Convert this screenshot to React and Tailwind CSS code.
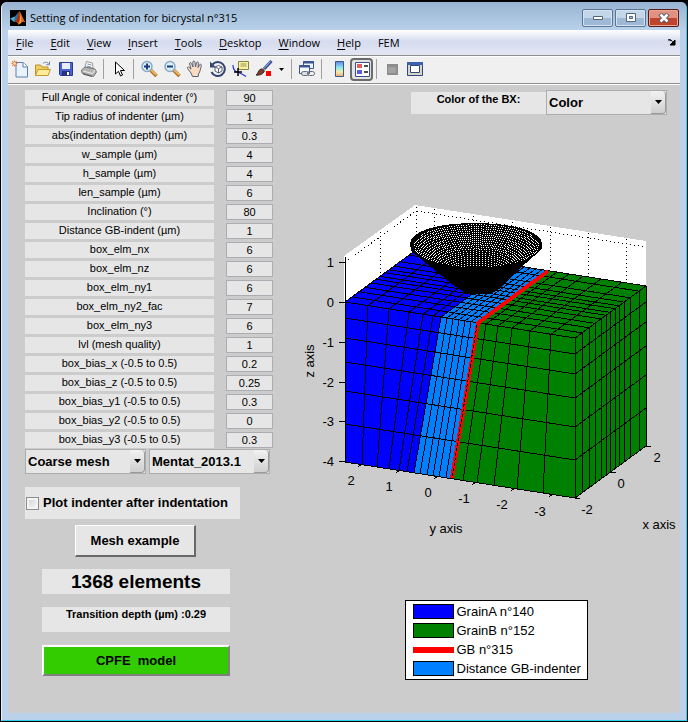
import React from "react";

const PARAMS = [
  ["Full Angle of conical indenter (°)", "90"],
  ["Tip radius of indenter (µm)", "1"],
  ["abs(indentation depth) (µm)", "0.3"],
  ["w_sample (µm)", "4"],
  ["h_sample (µm)", "4"],
  ["len_sample (µm)", "6"],
  ["Inclination (°)", "80"],
  ["Distance GB-indent (µm)", "1"],
  ["box_elm_nx", "6"],
  ["box_elm_nz", "6"],
  ["box_elm_ny1", "6"],
  ["box_elm_ny2_fac", "7"],
  ["box_elm_ny3", "6"],
  ["lvl (mesh quality)", "1"],
  ["box_bias_x (-0.5 to 0.5)", "0.2"],
  ["box_bias_z (-0.5 to 0.5)", "0.25"],
  ["box_bias_y1 (-0.5 to 0.5)", "0.3"],
  ["box_bias_y2 (-0.5 to 0.5)", "0"],
  ["box_bias_y3 (-0.5 to 0.5)", "0.3"],
];

const MENUS = ["File", "Edit", "View", "Insert", "Tools", "Desktop", "Window", "Help"];

/* ---------- toolbar icons ---------- */

const Icon = ({ children, size = 18 }) => (
  <svg width={size} height={size} viewBox="0 0 18 18" aria-hidden="true">
    {children}
  </svg>
);

const NewIcon = () => (
  <Icon>
    <path d="M5 2.500h7l4.500 4V17H5z" fill="#e9f3fd" stroke="#5f7fae" />
    <path d="M12 2.500V7h4.500" fill="#fff" stroke="#5f7fae" />
    <path d="M3.500 0.500v6M0.500 3.500h6M1.300 1.300l4.400 4.400M5.700 1.300L1.300 5.700" stroke="#e0793f" strokeWidth="1.200" />
    <circle cx="3.500" cy="3.500" r="1.200" fill="#fff3c0" />
  </Icon>
);
const OpenIcon = () => (
  <Icon>
    <path d="M1.500 15.500V5h5l1.500 2h6v8.500z" fill="#f2cf5c" stroke="#b8912c" />
    <path d="M1.500 15.500L4 9.500h12.500l-2.500 6z" fill="#fdeb9c" stroke="#c29a2e" />
    <path d="M9 3.500c2-2 4.500-1.500 6 .8M15.500 1.500v3.200h-3.200" fill="none" stroke="#6f86a0" />
  </Icon>
);
const SaveIcon = () => (
  <Icon>
    <path d="M2.500 2.500h13v13h-12l-1-1z" fill="#4a62cf" stroke="#2b3b95" />
    <path d="M5 3h8v6H5z" fill="#e8eefb" />
    <path d="M5 11h8v4.500H5z" fill="#25327c" />
    <path d="M10 12h2v3h-2z" fill="#fff" />
  </Icon>
);
const PrintIcon = () => (
  <Icon>
    <path d="M5 7L6.500 1.500l6 1.500L13 8z" fill="#fff" stroke="#999" />
    <path d="M7.500 4l4 1M7 6l4 1" stroke="#7f93b0" />
    <path d="M1.500 10L5 7l10 2 1.500 3-3 4.500L2 13z" fill="#b4b4b4" stroke="#777" />
    <path d="M3 11l9.500 2.500L15 10" fill="none" stroke="#eee" />
    <path d="M3 14l9 2.500" stroke="#555" />
  </Icon>
);
const CursorIcon = () => (
  <Icon>
    <path d="M5.500 2v12l3-2.700 2 4.700 2-1-2-4.500h4z" fill="#fff" stroke="#000" />
  </Icon>
);
const ZoomIcon = ({ plus }) => (
  <Icon>
    <path d="M10.500 10l6 6" stroke="#a8702c" strokeWidth="3.500" />
    <path d="M10.500 9.500l6 5.500" stroke="#f1b45c" strokeWidth="2" />
    <circle cx="7" cy="6.500" r="5" fill="#d9effb" stroke="#89a9c4" strokeWidth="1.500" />
    <path d={plus ? "M4 6.500h6M7 3.500v6" : "M4 6.500h6"} stroke="#1c3b78" strokeWidth="2" />
  </Icon>
);
const HandIcon = () => (
  <Icon>
    <path
      d="M5 13L1.500 8.500C.8 7 2.300 6.500 3.300 7.500L5 9.200 3.600 4c-.3-1.600 1.400-2 1.900-.6L7 7 6.800 2.200c0-1.500 2-1.500 2.200 0L9.500 7l1-4.200c.4-1.400 2.200-1 2 .4L12 7.600l1.500-2.800c.8-1.200 2.200-.4 1.800.9C14.500 8.500 14.500 11 12.500 14l-.3 2.500H6.500z"
      fill="#fbdcc0"
      stroke="#55617e"
    />
  </Icon>
);
const RotateIcon = () => (
  <Icon>
    <path d="M3.500 4.500A7 7 0 1 1 2.500 12" fill="none" stroke="#34466d" strokeWidth="2" />
    <path d="M1 1.500v6h6z" fill="#34466d" />
    <path d="M6 7l3.500-1.500L13 7v4l-3.500 2L6 11z" fill="#fff" stroke="#555f75" />
    <path d="M6 7l3.500 1.500L13 7M9.500 8.500V13" fill="none" stroke="#555f75" />
  </Icon>
);
const DataIcon = () => (
  <Icon>
    <path d="M6.500 1.500h10v8h-10z" fill="#f6f2a5" stroke="#8a8540" />
    <path d="M8.500 4h6M8.500 6h6" stroke="#9a954c" />
    <path d="M1 5c0 4 1.500 6 4 7s6 2 9 4.500" fill="none" stroke="#2a35d8" strokeWidth="1.200" />
    <path d="M6 8v8M2 12h8" stroke="#000" strokeWidth="1.500" />
  </Icon>
);
const BrushIcon = () => (
  <Icon>
    <path d="M16.500 1L9 9" stroke="#324a86" strokeWidth="3" />
    <path d="M15.500 1.500L9 8.500" stroke="#a9bfea" />
    <path d="M1 15c2-.5 2-5 5-6 2-.5 4 1.500 3 3-1.500 2.500-5 3.500-8 3z" fill="#75402f" stroke="#40221a" />
    <path d="M11 11h5v5h-5z" fill="#f00" />
  </Icon>
);
const LinkIcon = () => (
  <Icon>
    <path d="M5.500 1.500h10v7h-10z" fill="#eef4fd" stroke="#3b5790" />
    <path d="M5 2.500h11" stroke="#3b5790" strokeWidth="2" />
    <path d="M1.500 5.500h10v8h-10z" fill="#f7faff" stroke="#3b5790" />
    <path d="M1 6.500h11" stroke="#3b5790" strokeWidth="2" />
    <rect x="3.500" y="11.500" width="7" height="4" rx="2" fill="#ddd" stroke="#626b78" />
    <rect x="9.500" y="11.500" width="7" height="4" rx="2" fill="none" stroke="#626b78" />
  </Icon>
);
const ColorbarIcon = () => (
  <Icon>
    <defs>
      <linearGradient id="cbar" x1="0" y1="0" x2="0" y2="1">
        <stop offset="0" stopColor="#5e86ea" />
        <stop offset="0.400" stopColor="#8fe6ee" />
        <stop offset="0.700" stopColor="#f4efa0" />
        <stop offset="1" stopColor="#efa07c" />
      </linearGradient>
    </defs>
    <path d="M5.500 1.500h8v15h-8z" fill="url(#cbar)" stroke="#3f5689" />
  </Icon>
);
const LegendIcon = () => (
  <Icon>
    <path d="M2.500 2.500h14v14h-14z" fill="#fff" stroke="#3c5088" />
    <path d="M4 4h5v4H4z" fill="#e65c5c" />
    <path d="M4 10h5v4H4z" fill="#5c5ce0" />
    <path d="M11 6h4M11 12h4" stroke="#111" strokeWidth="1.500" />
  </Icon>
);
const HideIcon = () => (
  <Icon>
    <path d="M4 4h11v11H4z" fill="#8c8c8c" />
    <path d="M5 7h8v6H5z" fill="#a2a2a2" />
  </Icon>
);
const DockIcon = () => (
  <Icon>
    <path d="M1.500 2.500h15v13h-15z" fill="#d5d5c8" stroke="#30477f" />
    <path d="M1 3.500h16" stroke="#3c5fae" strokeWidth="3" />
    <path d="M4.500 5.500h9v7h-9z" fill="#fff" stroke="#30477f" />
  </Icon>
);

const Tool = ({ name, children, active }) => (
  <button
    type="button"
    aria-label={name}
    className={
      active
        ? "flex h-[23px] w-[23px] items-center justify-center rounded border-2 border-[#6b6b6b] bg-[#e2e2e2]"
        : "flex h-[23px] w-[23px] items-center justify-center"
    }
  >
    {children}
  </button>
);
const Sep = () => <span className="mx-[3px] h-5 w-px bg-[#a0a0a0]" />;

/* ---------- bicrystal mesh ---------- */

const TOP = {
  a: [345, 368, 389, 409, 423, 433, 441],
  d: [441, 447, 453, 459, 465, 471, 477],
  b: [477, 486, 498, 512, 530, 551, 575],
};
const BOTTOM = {
  a: [345, 362, 377, 389, 399, 407, 414],
  d: [414, 420, 427, 433, 439, 446, 452],
  b: [452, 463, 477, 494, 517, 543, 575],
};
const ROWS = [0, 16, 36, 60, 89, 122, 160];
const DEPTH = [0, 7, 14, 20, 26, 31, 35, 40, 44, 49, 55, 64, 71];
const edgeY = (x) => 302 + ((x - 345) * 36) / 230;
const lift = (dx) => (dx * 52) / 71;

function meshLines() {
  let d = "";
  const tops = [...TOP.a, ...TOP.d, ...TOP.b];
  const bottoms = [...BOTTOM.a, ...BOTTOM.d, ...BOTTOM.b];
  tops.forEach((x, i) => {
    const y = edgeY(x);
    d += `M${x} ${y}L${bottoms[i]} ${edgeY(bottoms[i]) + 160}M${x} ${y}l71 -52`;
  });
  ROWS.forEach((r) => {
    d += `M345 ${302 + r}L575 ${338 + r}l71 -52`;
  });
  DEPTH.forEach((dx) => {
    d += `M${345 + dx} ${302 - lift(dx)}l230 36v160`;
  });
  return d;
}

function block(key) {
  const t0 = TOP[key][0];
  const t1 = TOP[key][6];
  const b0 = BOTTOM[key][0];
  const b1 = BOTTOM[key][6];
  return `M${b0} ${edgeY(b0) + 160}L${t0} ${edgeY(t0)}l71 -52L${t1 + 71} ${edgeY(t1) - 52}L${t1} ${edgeY(t1)}L${b1} ${edgeY(b1) + 160}z`;
}

function indenterDots() {
  const seen = new Set();
  let d = "";
  for (let k = 0; k < 32; k++) {
    const t = 0.980 - k * 0.030;
    const step = t > 0.600 ? 2.600 / 66 : 3.200 / (66 * t);
    for (let n = -60; n <= 60; n++) {
      const phi = n * step;
      if (Math.abs(phi) > 2.080) continue;
      const x = Math.round(476 + 66 * t * Math.sin(phi));
      const y = Math.round(245 + 45 * (1 - t) - 22 * t * Math.cos(phi));
      const inside = ((x - 476) / 64) ** 2 + ((y - 245) / 22) ** 2 < 0.970;
      const near = [[0, 0], [1, 0], [-1, 0], [0, 1], [0, -1]].some(([i, j]) => seen.has(`${x + i},${y + j}`));
      if (!inside || near) continue;
      seen.add(`${x},${y}`);
      d += `M${x} ${y}h1v1h-1z`;
    }
  }
  return d;
}

const MESH = meshLines();
const DOTS = indenterDots();

const Z_TICKS = [["1", 262], ["0", 302], ["-1", 342], ["-2", 382], ["-3", 421], ["-4", 461]];
const Y_TICKS = [["2", 351, 485], ["1", 389, 491], ["0", 428, 497], ["-1", 464, 503], ["-2", 502, 509], ["-3", 540, 516]];
const X_TICKS = [["-2", 587, 514], ["0", 621, 488], ["2", 657, 462]];

const MeshPlot = () => (
  <svg viewBox="280 115 400 485" className="block w-full" role="img" aria-label="Bicrystal mesh with indenter">
    <g shapeRendering="crispEdges">
      <path d="M344 256L415 205L646 241V290L416 252L344 304z" fill="#fff" />
      <path
        d="M345 262L416 211L646 247M416 207V250M380 232V276M434 209V255M473 216V230M512 222V232M550 227V270M588 233V276M626 239V282"
        fill="none"
        stroke="#000"
        strokeDasharray="1 3"
      />
      <path d={block("a")} fill="#00f" />
      <path d={block("d")} fill="#0080ff" />
      <path d={block("b")} fill="#008000" />
      <path d="M575 338l71 -52v160l-71 52z" fill="#008000" />
      <path d={MESH} fill="none" stroke="#000" />
      <path d="M548 271L478 323L452 478" fill="none" stroke="#f00" strokeWidth="4" />
      <path d="M477 325L452 478" stroke="#000" strokeDasharray="3 2" />
      <path d="M345 257V461" stroke="#000" />
      <path
        d="M339 262h6M339 302h6M339 342h6M339 382h6M339 421h6M339 461h6M358 467l4-3M396 473l4-3M434 479l4-3M472 485l4-3M511 491l4-3M549 497l4-3M575 498l5 1M611 472l5 1M646 446l5 1"
        stroke="#000"
        fill="none"
      />
      <path d="M410 243C412 230 440 223 476 223S540 231 542 243V249L518 270L507 282Q498 292 488 294H467L453 285L437 272L411 251z" fill="#000" />
      <path d={DOTS} fill="#fff" />
    </g>
    <g className="font-['Liberation_Sans',Arial,sans-serif] text-[13px]" fill="#000">
      {Z_TICKS.map(([t, y]) => (
        <text key={t} x="334" y={y + 5} textAnchor="end">{t}</text>
      ))}
      {Y_TICKS.map(([t, x, y]) => (
        <text key={t} x={x} y={y} textAnchor="middle">{t}</text>
      ))}
      {X_TICKS.map(([t, x, y]) => (
        <text key={t} x={x} y={y} textAnchor="middle">{t}</text>
      ))}
      <text x="446" y="533" textAnchor="middle">y axis</text>
      <text x="659" y="529" textAnchor="middle">x axis</text>
      <text transform="translate(314 361) rotate(-90)" textAnchor="middle">z axis</text>
    </g>
  </svg>
);

/* ---------- form pieces ---------- */

const Drop = ({ id, label, value }) => (
  <div className="relative w-[121px]">
    <select
      id={id}
      aria-label={label}
      defaultValue={value}
      className="block h-[25px] w-full appearance-none border border-[#abadb3] bg-[#e6e6e6] pl-[2px] text-[13px] font-bold text-black"
    >
      <option>{value}</option>
    </select>
    <span className="pointer-events-none absolute top-px right-px flex h-[23px] w-[15px] items-center justify-center rounded-r-sm border-r border-b border-[#9a9a9a] bg-linear-to-b from-[#f2f2f2] to-[#cfcfcf]">
      <svg width="7" height="4" viewBox="0 0 7 4" aria-hidden="true">
        <path d="M0 0h7L3.500 4z" />
      </svg>
    </span>
  </div>
);

const LEGEND = [
  ["GrainA n°140", "h-[15px] border border-black bg-[#0000ff]"],
  ["GrainB n°152", "h-[15px] border border-black bg-[#008000]"],
  ["GB n°315", "h-[6px] bg-[#ff0000]"],
  ["Distance GB-indenter", "h-[15px] border border-black bg-[#0080ff]"],
];

const CAPTION =
  "flex h-[18px] items-center justify-center rounded-xs border border-[#5b7595] bg-linear-to-b from-[#c3d6ea] from-50% to-[#9db9d6] to-50% shadow-[inset_0_0_0_1px_#d5e3f1]";

export default function App() {
  return (
    <div className="border border-t-2 border-black bg-black font-['Liberation_Sans',Arial,sans-serif] text-black">
      <div className="rounded-t-md border-r border-b border-l border-r-[#2fd0ea] border-b-[#2fd0ea] border-l-[#e8f1fa] bg-[#b9d1ea] px-[6px] pb-[7px]">
        <header className="-mx-[6px] flex h-7 items-center gap-1 rounded-t-md bg-linear-to-b from-[#98b4d2] to-[#b9d1ea] pt-[5px] pr-[7px] pb-px pl-2">
          <svg width="16" height="16" viewBox="0 0 16 16" aria-hidden="true">
            <path d="M0 0h16v16H0z" fill="#000" />
            <path d="M0 8.500L5 6.500l2 2.500-3 3z" fill="#4bb3c9" />
            <path d="M5 6.500L9 1.500 8 9l-4 3z" fill="#2f6d9e" />
            <path d="M9.500 1C11 2.500 13 9 15.500 12.500c-2-1-3-1-4.500.5l-2.500 2C8 13 6.500 11.500 5 11.500 7.500 10 8.500 4 9.500 1z" fill="#e9661d" />
            <path d="M9.500 1c.5 4 .5 8-1 12C8 12 6.500 11.500 5 11.500 7.500 10 8.500 4 9.500 1z" fill="#a32b12" />
            <path d="M10 4c1 3 1.500 6 .500 9l-1.500 1c1.500-3 1.500-6 1-10z" fill="#fbc14a" />
          </svg>
          <h1 className="font-['Open_Sans',sans-serif] text-[11px] leading-4 whitespace-nowrap">
            Setting of indentation for bicrystal n°315
          </h1>
          <div className="ml-auto flex gap-[2px]">
            <button type="button" aria-label="Minimize" className={`${CAPTION} w-[31px]`}>
              <svg width="12" height="6" viewBox="0 0 12 6" aria-hidden="true">
                <path d="M1.500 1.500h9v3h-9z" fill="#fff" stroke="#53657a" />
              </svg>
            </button>
            <button type="button" aria-label="Maximize" className={`${CAPTION} w-[31px]`}>
              <svg width="12" height="10" viewBox="0 0 12 10" aria-hidden="true">
                <path d="M1.500 .5h9v8h-9z" fill="#fff" stroke="#53657a" />
                <path d="M4.500 3.500h3v2h-3z" fill="#a9c1db" stroke="#53657a" />
              </svg>
            </button>
            <button
              type="button"
              aria-label="Close"
              className="flex h-[18px] w-[31px] items-center justify-center rounded-xs border border-[#5a1a1a] bg-linear-to-b from-[#e0917f] from-50% to-[#c0442b] to-50% shadow-[inset_0_0_0_1px_#e8a697]"
            >
              <svg width="12" height="10" viewBox="0 0 12 10" aria-hidden="true">
                <path d="M2 1l8 8M10 1L2 9" stroke="#5d5563" strokeWidth="4.500" />
                <path d="M2.500 1.500l7 7M9.500 1.500l-7 7" stroke="#fff" strokeWidth="2.500" />
              </svg>
            </button>
          </div>
        </header>

        <nav className="flex h-[26px] items-center gap-[17px] border-b border-[#8f8f8f] bg-linear-to-b from-white via-[#d6dcee] via-45% to-[#e2e5f3] pl-2 font-['Open_Sans',sans-serif] text-[11px]">
          {MENUS.map((m) => (
            <button key={m} type="button" className="leading-4">
              <span className="underline underline-offset-2">{m[0]}</span>
              {m.slice(1)}
            </button>
          ))}
          <button type="button" className="leading-4">FEM</button>
          <button type="button" aria-label="Dock figure" className="mr-1 ml-auto">
            <svg width="8" height="7" viewBox="0 0 8 7" aria-hidden="true">
              <path d="M0 1c2-.8 3-.3 4.500 1.500M7 1v5H2z" stroke="#000" fill="#000" />
            </svg>
          </button>
        </nav>

        <div role="toolbar" aria-label="Figure tools" className="flex h-7 items-center border-t border-b border-t-white border-b-[#8f8f8f] bg-[#f0f0f0] pb-[2px]">
          <Tool name="New figure"><NewIcon /></Tool>
          <Tool name="Open"><OpenIcon /></Tool>
          <Tool name="Save"><SaveIcon /></Tool>
          <Tool name="Print"><PrintIcon /></Tool>
          <Sep />
          <Tool name="Edit plot"><CursorIcon /></Tool>
          <Sep />
          <Tool name="Zoom in"><ZoomIcon plus /></Tool>
          <Tool name="Zoom out"><ZoomIcon /></Tool>
          <Tool name="Pan"><HandIcon /></Tool>
          <Tool name="Rotate 3D"><RotateIcon /></Tool>
          <Tool name="Data cursor"><DataIcon /></Tool>
          <Tool name="Brush"><BrushIcon /></Tool>
          <button type="button" aria-label="Brush options" className="flex h-5 w-[13px] items-center justify-center">
            <svg width="5" height="3" viewBox="0 0 5 3" aria-hidden="true"><path d="M0 0h5L2.500 3z" /></svg>
          </button>
          <Sep />
          <Tool name="Link plot"><LinkIcon /></Tool>
          <Sep />
          <span className="w-[2px]" />
          <Tool name="Insert colorbar"><ColorbarIcon /></Tool>
          <Tool name="Insert legend" active><LegendIcon /></Tool>
          <Sep />
          <Tool name="Hide plot tools"><HideIcon /></Tool>
          <Tool name="Show plot tools"><DockIcon /></Tool>
        </div>

        <main className="flex border-t border-white bg-[#cccccc]">
          <form className="w-[272px] shrink-0 pt-[5px] pb-[37px] pl-[17px]">
            <div className="flex flex-col gap-[3px]">
              {PARAMS.map(([label, value], i) => (
                <div key={label} className="flex h-4 gap-3">
                  <label htmlFor={`p${i}`} className="w-[189px] bg-[#e6e6e6] text-center text-[11px] leading-[15px]">
                    {label}
                  </label>
                  <input
                    id={`p${i}`}
                    defaultValue={value}
                    className="w-[47px] border border-[#abadb3] bg-[#e6e6e6] text-center text-[11px] leading-[14px]"
                  />
                </div>
              ))}
            </div>
            <div className="mt-px flex gap-[3px]">
              <Drop id="mesh" label="Mesh quality" value="Coarse mesh" />
              <Drop id="solver" label="FEM software" value="Mentat_2013.1" />
            </div>
            <label className="mt-[13px] flex h-8 w-[215px] items-center gap-1 bg-[#e6e6e6] pl-px text-[13px] font-bold whitespace-nowrap">
              <input
                type="checkbox"
                className="h-[13px] w-[13px] appearance-none border border-[#8e8f8f] bg-linear-to-br from-[#cfd3d8] to-[#fafafa] shadow-[inset_0_0_0_2px_#f4f4f4]"
              />
              Plot indenter after indentation
            </label>
            <button
              type="button"
              className="mt-[6px] ml-[50px] block h-8 w-[121px] border-t border-r-2 border-b-2 border-l border-t-white border-r-[#696969] border-b-[#696969] border-l-white bg-[#e6e6e6] text-[13px] font-bold"
            >
              Mesh example
            </button>
            <div className="ml-[17px] w-[188px] text-center font-bold">
              <p className="mt-3 bg-[#e6e6e6] text-[19px] leading-[25px]">1368 elements</p>
              <p className="mt-[13px] h-[25px] bg-[#e6e6e6] text-[11px] leading-[15px]">Transition depth (µm) :0.29</p>
              <button
                type="button"
                className="mt-[13px] block h-[31px] w-full border-2 border-t-white border-r-[#808080] border-b-[#808080] border-l-white bg-[#33cc00] text-[13px] whitespace-pre"
              >
                {"CPFE  model"}
              </button>
            </div>
          </form>

          <section className="min-w-0 flex-1 pt-[5px]">
            <div className="flex justify-end pr-[13px]">
              <label htmlFor="bx" className="mt-[2px] h-[22px] w-[135px] bg-[#e6e6e6] text-center text-[11px] leading-[15px] font-bold">
                Color of the BX:
              </label>
              <Drop id="bx" value="Color" />
            </div>
            <MeshPlot />
            <div className="flex justify-center pl-8">
              <ul className="flex h-20 w-[183px] flex-col justify-center border border-black bg-white text-[13px]">
                {LEGEND.map(([name, swatch]) => (
                  <li key={name} className="flex h-[19px] items-center gap-[3px] pl-[7px] whitespace-nowrap">
                    <span className={`w-[41px] shrink-0 ${swatch}`} />
                    {name}
                  </li>
                ))}
              </ul>
            </div>
          </section>
        </main>
      </div>
    </div>
  );
}
